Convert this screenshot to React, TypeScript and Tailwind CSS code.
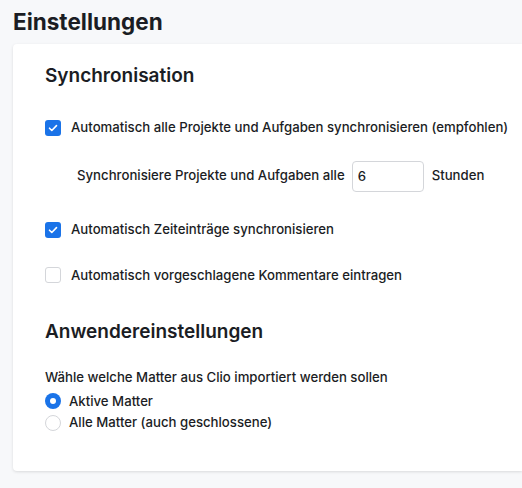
import { useState } from "react";

function Check({ checked }: { checked: boolean }) {
  return checked ? (
    <span className="flex h-4 w-4 shrink-0 items-center justify-center rounded-[3px] bg-[#1a73e8]">
      <svg className="h-3 w-3" viewBox="0 0 12 12" fill="none">
        <path d="M2.5 6.2l2.3 2.3 4.7-4.9" stroke="white" strokeWidth="1.6" strokeLinecap="round" strokeLinejoin="round" />
      </svg>
    </span>
  ) : (
    <span className="h-4 w-4 shrink-0 rounded-[3px] border border-[#d4d6da] bg-white" />
  );
}

function Radio({ checked }: { checked: boolean }) {
  return checked ? (
    <span className="flex h-4 w-4 shrink-0 items-center justify-center rounded-full bg-[#1a73e8]">
      <span className="h-1.5 w-1.5 rounded-full bg-white" />
    </span>
  ) : (
    <span className="h-4 w-4 shrink-0 rounded-full border border-[#d4d6da] bg-white" />
  );
}

export default function App() {
  const [hours, setHours] = useState("6");

  return (
    <div
      className="min-h-[488px] bg-[#f7f8fa] pl-[13px] pt-[7px] text-[#1b1d24]"
      style={{ fontFamily: "Inter, 'Noto Sans', sans-serif" }}
    >
      <h1 className="text-[22.5px] font-bold leading-[30px]">Einstellungen</h1>

      <div className="mt-[7px] h-[427px] rounded-l-[4px] bg-white pl-8 pt-[20px] font-medium shadow-[0_1px_3px_rgba(0,0,0,0.12)]">
        <h2 className="text-[19px] font-semibold leading-[24px]">Synchronisation</h2>

        <div className="mt-[30px] flex items-center gap-[10px] text-[13.2px]">
          <Check checked />
          <span>Automatisch alle Projekte und Aufgaben synchronisieren (empfohlen)</span>
        </div>

        <div className="mt-[23px] flex items-center pl-8 text-[13.2px]">
          <span>Synchronisiere Projekte und Aufgaben alle</span>
          <input
            value={hours}
            onChange={(e) => setHours(e.target.value)}
            className="ml-[7px] h-[31px] w-[72px] rounded-[4px] border border-[#d4d6da] px-[5px] text-[13.2px] font-medium outline-none"
          />
          <span className="ml-2">Stunden</span>
        </div>

        <div className="mt-[28px] flex items-center gap-[10px] text-[13.2px]">
          <Check checked />
          <span>Automatisch Zeiteinträge synchronisieren</span>
        </div>

        <div className="mt-[26px] flex items-center gap-[10px] text-[13.2px]">
          <Check checked={false} />
          <span>Automatisch vorgeschlagene Kommentare eintragen</span>
        </div>

        <h2 className="mt-[35px] text-[19px] font-semibold leading-[24px]">Anwendereinstellungen</h2>

        <p className="mt-[23px] text-[13.2px] leading-[20px]">Wähle welche Matter aus Clio importiert werden sollen</p>
        <div className="mt-[4px] flex items-center gap-2 text-[13.2px] leading-[20px]">
          <Radio checked />
          <span>Aktive Matter</span>
        </div>
        <div className="mt-[1px] flex items-center gap-2 text-[13.2px] leading-[21px]">
          <Radio checked={false} />
          <span>Alle Matter (auch geschlossene)</span>
        </div>
      </div>
    </div>
  );
}
